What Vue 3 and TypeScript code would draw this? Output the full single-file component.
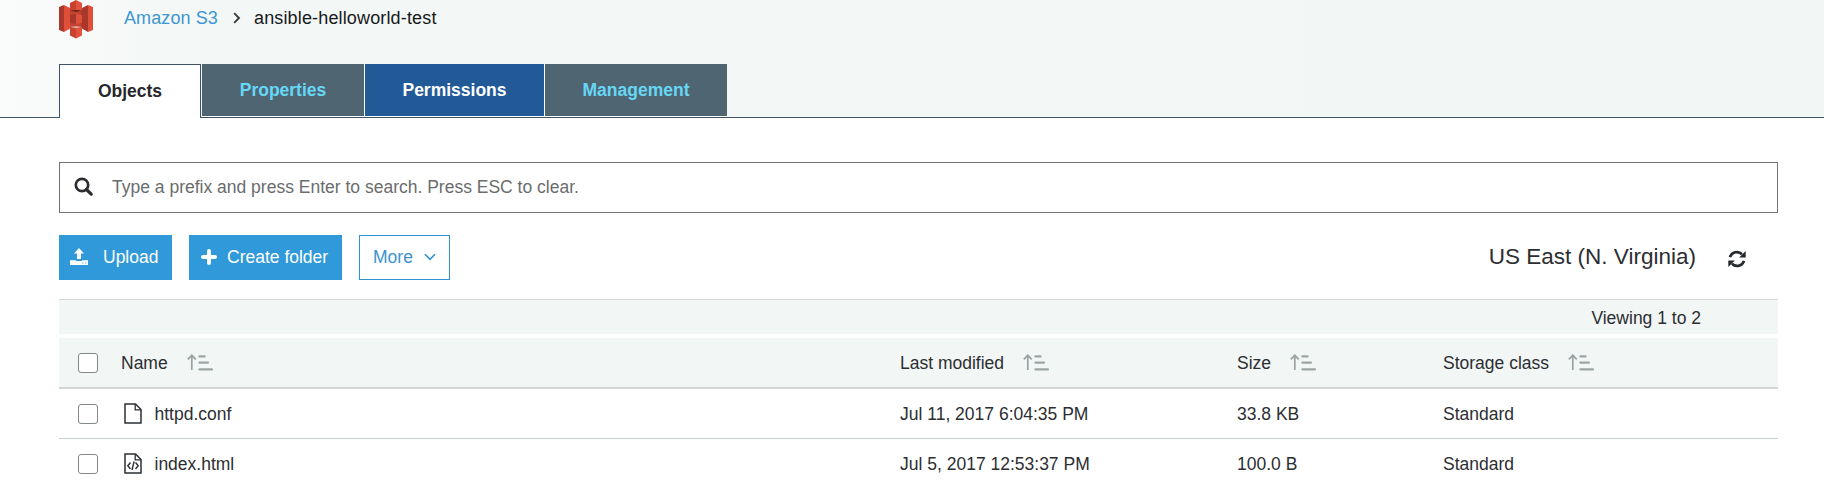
<script setup lang="ts">
interface FileRow { name: string; code: boolean; modified: string; size: string; storage: string }

const tabs: { label: string; kind: string }[] = [
  { label: 'Objects', kind: 'active' },
  { label: 'Properties', kind: 'properties' },
  { label: 'Permissions', kind: 'permissions' },
  { label: 'Management', kind: 'management' },
]
const columns: string[] = ['Name', 'Last modified', 'Size', 'Storage class']
const files: FileRow[] = [
  { name: 'httpd.conf', code: false, modified: 'Jul 11, 2017 6:04:35 PM', size: '33.8 KB', storage: 'Standard' },
  { name: 'index.html', code: true, modified: 'Jul 5, 2017 12:53:37 PM', size: '100.0 B', storage: 'Standard' },
]
</script>

<template>
  <div class="page">
    <header class="top">
      <nav class="crumbs">
        <svg class="logo" width="34" height="39" viewBox="0 0 34 39">
          <path d="M0 7L5 5V32L0 30Z" fill="#a8382b" />
          <path d="M5 5L12 8.5V28L5 32Z" fill="#e04f3a" />
          <path d="M11 9H23V28H11Z" fill="#c24332" />
          <path d="M34 7L29 5V32L34 30Z" fill="#e04f3a" />
          <path d="M29 5L22 8.5V28L29 32Z" fill="#a9382b" />
          <path d="M11 3L17 0V10L11 10.5Z" fill="#c8432f" />
          <path d="M17 0L23 3V10.5L17 10Z" fill="#e2523d" />
          <path d="M11 10.5L17 10L23 10.5L17 12Z" fill="#6d241b" />
          <path d="M11 15L17 14V24L11 23Z" fill="#a6392b" />
          <path d="M17 14L23 15V23L17 24Z" fill="#e04f3a" />
          <path d="M11 27L17 28V38.5L11 35.5Z" fill="#c8432f" />
          <path d="M17 28L23 27V35.5L17 38.5Z" fill="#e2523d" />
          <path d="M11 27L17 26L23 27L17 28.3Z" fill="#e8a297" />
        </svg>
        <a class="home">Amazon S3</a>
        <svg class="sep" width="8" height="12" viewBox="0 0 8 12"><path d="M1.2 1.2L6 6L1.2 10.8" fill="none" stroke="#35383b" stroke-width="1.8" /></svg>
        <span class="bucket">ansible-helloworld-test</span>
      </nav>
      <div class="tabs">
        <div v-for="t in tabs" :key="t.label" class="tab" :class="t.kind">{{ t.label }}</div>
      </div>
    </header>

    <main class="content">
      <div class="search">
        <svg width="20" height="20" viewBox="0 0 20 20"><circle cx="8" cy="8" r="6.2" fill="none" stroke="#2b2d31" stroke-width="2.7" /><path d="M12.5 12.5L17.2 17.2" stroke="#2b2d31" stroke-width="3.2" stroke-linecap="round" /></svg>
        <span>Type a prefix and press Enter to search. Press ESC to clear.</span>
      </div>

      <div class="actions">
        <button class="btn upload">
          <svg width="18" height="18" viewBox="0 0 18 18"><path d="M9 0L14 5.4H11V11H7V5.4H4Z" fill="#fff" /><path d="M0 12.3H6V13H12V12.3H18V17H0ZM12.4 14.5V15.6H13.5V14.5ZM15.2 14.5V15.6H16.3V14.5Z" fill="#fff" fill-rule="evenodd" /></svg>
          <span>Upload</span>
        </button>
        <button class="btn create">
          <svg width="16" height="16" viewBox="0 0 16 16"><path d="M8 2V14M2 8H14" stroke="#fff" stroke-width="4" stroke-linecap="round" /></svg>
          <span>Create folder</span>
        </button>
        <button class="btn more">
          <span>More</span>
          <svg width="12" height="8" viewBox="0 0 12 8"><path d="M1 1.3L6 6.3L11 1.3" fill="none" stroke="#2e93d4" stroke-width="1.6" /></svg>
        </button>
        <span class="region">US East (N. Virginia)</span>
        <svg class="refresh" width="18" height="18" viewBox="0 0 18 18">
          <path d="M2 7.2A7.2 7.2 0 0 1 14 4.2M16 10.8A7.2 7.2 0 0 1 4 13.8" fill="none" stroke="#25282c" stroke-width="2.7" />
          <path d="M17.7 1V7.6H11.1ZM.3 17V10.4H6.9Z" fill="#25282c" />
        </svg>
      </div>

      <div class="viewing">Viewing 1 to 2</div>
      <div class="row head">
        <span class="check"><i class="box"></i></span>
        <span v-for="c in columns" :key="c" class="cell">
          {{ c }}
          <svg class="sort" width="26" height="17" viewBox="0 0 26 17"><path d="M4.8 16V1.5M.8 5.3L4.8 1.3L8.8 5.3" fill="none" stroke="#9aa2a3" stroke-width="1.7" /><path d="M12.4 2.4H17.6M12.4 8.6H21M12.4 15.3H25" stroke="#9ca5a5" stroke-width="2.2" stroke-linecap="round" /></svg>
        </span>
      </div>
      <div v-for="f in files" :key="f.name" class="row">
        <span class="check"><i class="box"></i></span>
        <span class="cell file">
          <svg width="18" height="21" viewBox="0 0 18 21">
            <path d="M1 1H11.5L17 6.5V20H1Z" fill="none" stroke="#2d3034" stroke-width="1.5" />
            <path d="M11.2 1V6.8H17" fill="none" stroke="#2d3034" stroke-width="1.3" />
            <path v-if="f.code" d="M6.5 9.5L3.8 12.8L6.5 16M11.5 9.5L14.2 12.8L11.5 16M10.1 8.5L8 17" fill="none" stroke="#2d3034" stroke-width="1.4" />
          </svg>
          {{ f.name }}
        </span>
        <span class="cell">{{ f.modified }}</span>
        <span class="cell">{{ f.size }}</span>
        <span class="cell">{{ f.storage }}</span>
      </div>
    </main>
  </div>
</template>

<style>
body { margin: 0; overflow: hidden; background: #fff; }
</style>

<style scoped>
.page { height: 483px; overflow: hidden; background: #fff; color: #2c2e32; font: 17.5px/22px "Liberation Sans", Arial, sans-serif; }
.top { box-sizing: border-box; height: 118px; padding-left: 59px; border-bottom: 1px solid #3f5268; background: linear-gradient(90deg, #fafcfb 0, #f3f7f6 200px, #f2f6f5 100%); }
.crumbs { display: flex; height: 64px; align-items: flex-start; font-size: 18px; }
.logo { flex: none; }
.home { margin: 7px 0 0 31px; width: 95px; color: #3c96d3; letter-spacing: 0.1px; white-space: nowrap; }
.sep { margin: 12px 0 0 14px; }
.bucket { margin: 7px 0 0 13px; color: #17191b; letter-spacing: 0.15px; white-space: nowrap; }
.tabs { display: flex; align-items: flex-start; gap: 1px; }
.tab { box-sizing: border-box; height: 52px; line-height: 52px; text-align: center; font-weight: 700; box-shadow: 0 1px #fff, 1px 0 #fff; }
.active { width: 142px; height: 54px; border: 1px solid #3f5268; border-bottom: 0; background: #fff; color: #25272b; box-shadow: none; }
.properties { width: 162px; background: #4f6672; color: #67d7f5; }
.permissions { width: 179px; background: #225a98; color: #fff; }
.management { width: 182px; background: #4f6672; color: #67d7f5; box-shadow: 0 1px #fff; }
.content { width: 1719px; margin-left: 59px; padding-top: 44px; }
.search { box-sizing: border-box; display: flex; align-items: center; height: 51px; padding: 0 0 2px 14px; gap: 18px; border: 1px solid #6f756f; color: #6a6d6c; }
.actions { display: flex; align-items: center; height: 45px; margin-top: 22px; }
.btn { box-sizing: border-box; display: flex; align-items: center; height: 45px; padding: 0 0 2px; border: 0; background: #2f99d9; color: #fff; font: inherit; white-space: nowrap; }
.upload { width: 113px; padding-left: 11px; gap: 15px; }
.create { width: 153px; margin-left: 17px; padding-left: 12px; gap: 10px; }
.more { width: 91px; margin-left: 17px; padding-left: 13px; gap: 11px; border: 1px solid #2e93d4; background: #fff; color: #3b92d0; }
.region { margin: 0 0 1px auto; font-size: 22.5px; }
.refresh { margin: 2px 32px 0 32px; }
.viewing { box-sizing: border-box; height: 35px; margin-top: 19px; padding-right: 77px; border-top: 1px solid #d3d7d6; background: #f2f6f5; line-height: 36px; text-align: right; }
.row { box-sizing: border-box; display: grid; grid-template-columns: 62px 779px 337px 206px 335px; align-items: center; height: 50px; border-bottom: 1px solid #c7d0c9; }
.head { height: 51px; margin-top: 4px; border-bottom: 2px solid #d2d5d5; background: #f2f6f5; }
.check { padding-left: 19px; }
.box { box-sizing: border-box; display: block; width: 20px; height: 20px; border: 1px solid #838985; border-radius: 3px; background: #fff; }
.cell { display: flex; align-items: center; white-space: nowrap; }
.sort { margin-left: 19px; }
.file { padding-left: 3px; gap: 12.5px; }
</style>
